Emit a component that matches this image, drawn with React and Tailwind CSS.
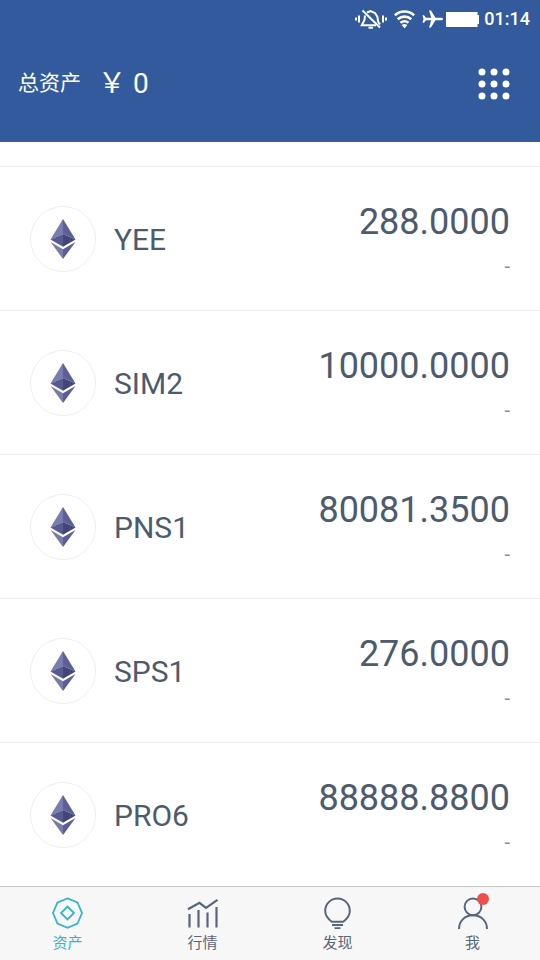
import { useState } from "react";

const tokens = [
  { name: "YEE", balance: "288.0000" },
  { name: "SIM2", balance: "10000.0000" },
  { name: "PNS1", balance: "80081.3500" },
  { name: "SPS1", balance: "276.0000" },
  { name: "PRO6", balance: "88888.8800" },
];

const tabs = [
  { id: "assets", label: "资产", Icon: AssetsIcon },
  { id: "market", label: "行情", Icon: MarketIcon },
  { id: "discover", label: "发现", Icon: DiscoverIcon },
  { id: "me", label: "我", Icon: MeIcon, unread: true },
];

function MuteIcon() {
  return (
    <svg width="32" height="20" viewBox="0 0 32 20" fill="none" stroke="currentColor" strokeWidth="2">
      <path d="M1 8.500v3M4 6.500v7M28 6.500v7M31 8.500v3" />
      <path d="M10 6.500 9.500 11 6.800 16.200H21" />
      <path d="M12 3.500 15.500 2 20 4l2.500 4 .5 4.500 2 3" />
      <path d="M7.500 1.500 25 18.500" />
      <path d="M13.500 18.700h4.500" />
    </svg>
  );
}

function WifiIcon() {
  return (
    <svg width="21" height="19" viewBox="0 0 21 19" fill="none" stroke="currentColor" strokeWidth="2.600">
      <path d="M.8 5.200C6.500.300 14.500.300 20.200 5.200" />
      <path d="M3.700 9.200c4-3.400 9.600-3.400 13.600 0" />
      <path d="M6.500 12.800c2.400-1.900 5.600-1.900 8 0" />
      <path d="M7.700 15c1.600-1.200 4-1.200 5.600 0l-2.800 3.500z" fill="currentColor" stroke="none" />
    </svg>
  );
}

function PlaneIcon() {
  return (
    <svg width="21" height="20" viewBox="0 0 21 20" fill="currentColor">
      <path d="M21 10c0-.9-.8-1.300-1.800-1.300H13.500L9 1.500H7L9.300 8.700H4L2 6.300H.5L1.500 10l-1 3.700H2l2-2.400h5.300L7 18.500h2l4.500-7.200h5.700c1 0 1.800-.4 1.800-1.300z" />
    </svg>
  );
}

function BatteryIcon() {
  return (
    <svg width="33" height="15" viewBox="0 0 33 15" fill="currentColor">
      <path d="M0 0h31.500v3H33v9h-1.500v3H0z" />
    </svg>
  );
}

function GridIcon() {
  return (
    <svg width="32" height="32" viewBox="0 0 32 32" fill="currentColor">
      {[4, 16, 28].map((y) =>
        [4, 16, 28].map((x) => <circle key={`${x}-${y}`} cx={x} cy={y} r="3.500" />)
      )}
    </svg>
  );
}

function EthIcon() {
  return (
    <svg width="26" height="40" viewBox="0 0 26 40">
      <path d="M13 0 .5 20.500 13 15z" fill="#777cab" />
      <path d="M13 0v15l12.500 5.500z" fill="#5c6096" />
      <path d="M.5 20.500 13 15v12.700z" fill="#565a91" />
      <path d="M25.500 20.500 13 15v12.700z" fill="#43467a" />
      <path d="M.5 23 13 30.200V40z" fill="#777cab" />
      <path d="M25.500 23 13 30.200V40z" fill="#5a5e93" />
    </svg>
  );
}

function AssetsIcon() {
  return (
    <svg width="32" height="32" viewBox="0 0 32 32" fill="none" stroke="currentColor" strokeWidth="1.800">
      <path d="M15.500 1.400 25.500 5.500 30 16 25.500 26.500 15.500 30.800 5.500 26.500 1 16 5.500 5.500z" />
      <path d="M15.500 9.500 22 16 15.500 22.500 9 16z" />
    </svg>
  );
}

function MarketIcon() {
  return (
    <svg width="32" height="32" viewBox="0 0 32 32" fill="none" stroke="currentColor" strokeWidth="2.200">
      <path d="M1 12.200 12.500 5.800 19 10.800 30.500 2.800" />
      <path d="M2.500 17V30.500M11.500 13V30.500M20.500 15.500V30.500M29.500 10V30.500" />
    </svg>
  );
}

function DiscoverIcon() {
  return (
    <svg width="32" height="32" viewBox="0 0 32 32" fill="none" stroke="currentColor" strokeWidth="2">
      <path d="M9.800 24.700C6 22 3.200 18 3.200 13.800a12.300 12.300 0 0 1 24.600 0c0 4.200-2.800 8.200-6.600 10.900z" />
      <path d="M10 28h11M12.500 31.200h6" />
    </svg>
  );
}

function MeIcon() {
  return (
    <svg width="32" height="32" viewBox="0 0 32 32" fill="none" stroke="currentColor" strokeWidth="2">
      <circle cx="16" cy="9.800" r="8.400" />
      <path d="M2 32C2 24 8 18.300 16 18.300S30 24 30 32" />
    </svg>
  );
}

function TokenRow({ name, balance }) {
  return (
    <li className="flex h-36 items-center border-t border-[#efefef] px-[30px]">
      <div className="flex h-[66px] w-[66px] items-center justify-center rounded-full border border-[#efefef]">
        <EthIcon />
      </div>
      <span className="ml-[18px] pt-[2px] text-3xl">{name}</span>
      <div className="ml-auto flex flex-col items-end gap-3 pt-[2px]">
        <span className="text-4xl">{balance}</span>
        <span className="text-xl leading-6 text-[#8a8f96]">-</span>
      </div>
    </li>
  );
}

export default function App() {
  const [active, setActive] = useState("assets");

  return (
    <div className="flex min-h-screen flex-col bg-white font-['Roboto','Noto_Sans_CJK_SC',sans-serif] text-[#4d5b6d]">
      <header className="bg-[#345a9e] pb-10 text-white">
        {/* Status bar */}
        <div className="flex h-[38px] items-center justify-end gap-[3px] pr-[10px]">
          <MuteIcon />
          <div className="px-1">
            <WifiIcon />
          </div>
          <PlaneIcon />
          <BatteryIcon />
          <span className="pl-[2px] text-lg font-medium">01:14</span>
        </div>

        {/* Total */}
        <div className="flex h-16 items-center pl-[18px] pr-[30px] pt-7">
          <span className="text-[21px]">总资产</span>
          <span className="ml-[17px] text-[28px]">￥ 0</span>
          <button type="button" aria-label="菜单" className="ml-auto">
            <GridIcon />
          </button>
        </div>
      </header>

      <main className="flex-1 pt-6">
        <ul>
          {tokens.map((token) => (
            <TokenRow key={token.name} name={token.name} balance={token.balance} />
          ))}
        </ul>
      </main>

      <nav className="grid grid-cols-4 border-t border-[#c8c8c8] bg-[#f7f7f7]">
        {tabs.map(({ id, label, Icon, unread }) => (
          <button
            key={id}
            type="button"
            onClick={() => setActive(id)}
            className={`flex h-[73px] flex-col items-center pt-[10px] ${
              active === id ? "text-[#35b5c9]" : "text-[#5a6678]"
            }`}
          >
            <span className="relative">
              <Icon />
              {unread && (
                <span className="absolute -top-1 right-0 h-3 w-3 rounded-full bg-[#f04e4e]" />
              )}
            </span>
            <span className="mt-1 text-[15px] leading-5">{label}</span>
          </button>
        ))}
      </nav>
    </div>
  );
}
